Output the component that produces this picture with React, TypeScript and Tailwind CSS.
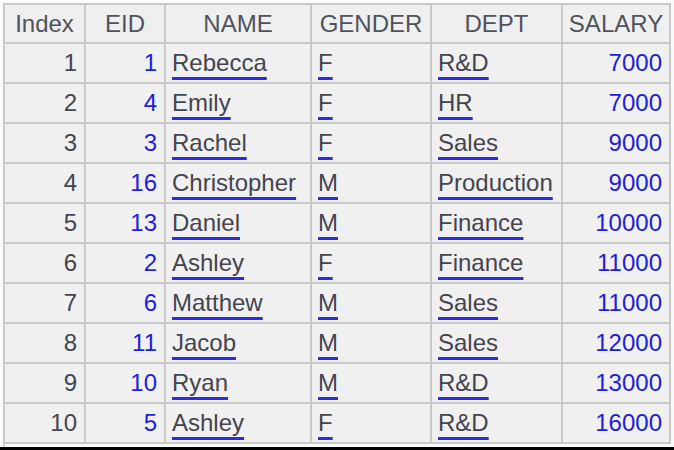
const rows = [
  { eid: 1, name: "Rebecca", gender: "F", dept: "R&D", salary: 7000 },
  { eid: 4, name: "Emily", gender: "F", dept: "HR", salary: 7000 },
  { eid: 3, name: "Rachel", gender: "F", dept: "Sales", salary: 9000 },
  { eid: 16, name: "Christopher", gender: "M", dept: "Production", salary: 9000 },
  { eid: 13, name: "Daniel", gender: "M", dept: "Finance", salary: 10000 },
  { eid: 2, name: "Ashley", gender: "F", dept: "Finance", salary: 11000 },
  { eid: 6, name: "Matthew", gender: "M", dept: "Sales", salary: 11000 },
  { eid: 11, name: "Jacob", gender: "M", dept: "Sales", salary: 12000 },
  { eid: 10, name: "Ryan", gender: "M", dept: "R&D", salary: 13000 },
  { eid: 5, name: "Ashley", gender: "F", dept: "R&D", salary: 16000 },
];

const headers = ["Index", "EID", "NAME", "GENDER", "DEPT", "SALARY"];

function Link({ text }: { text: string }) {
  return (
    <span className="underline decoration-[#2b2be0] decoration-[3px] underline-offset-[6px]">
      {text}
    </span>
  );
}

export default function App() {
  const cell = "bg-[#f0f0f0] flex items-center h-[38px] whitespace-nowrap overflow-hidden";
  const left = `${cell} pl-[6px]`;
  const right = `${cell} justify-end pr-[7px]`;

  return (
    <div
      className="w-[674px] h-[450px] bg-[#fafafa] flex flex-col text-[24px] leading-none text-[#44444f]"
      style={{ fontFamily: '"Liberation Sans", Arial, sans-serif' }}
    >
      <div className="pt-[3px] pl-[3px]">
        <div className="grid grid-cols-[79px_78px_144px_118px_129px_106px] gap-[2px] p-[2px] bg-[#c9c9c9] w-[668px]">
          {headers.map((h) => (
            <div key={h} className="bg-[#efefef] h-[37px] flex items-center justify-center text-[#50525d]">
              {h}
            </div>
          ))}
          {rows.map((r, i) => (
            <div key={i} className="contents">
              <div className={right}>{i + 1}</div>
              <div className={`${right} text-[#2020d8]`}>{r.eid}</div>
              <div className={left}>
                <Link text={r.name} />
              </div>
              <div className={left}>
                <Link text={r.gender} />
              </div>
              <div className={left}>
                <Link text={r.dept} />
              </div>
              <div className={`${right} text-[#2020d8]`}>{r.salary}</div>
            </div>
          ))}
        </div>
      </div>
      <div className="ml-[3px] w-[2px] h-[3px] bg-[#c9c9c9]" />
      <div className="h-[3px] bg-black" />
    </div>
  );
}
